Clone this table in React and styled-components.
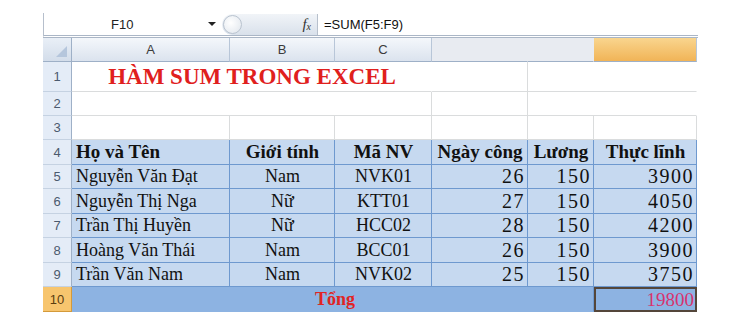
import React from 'react';
import styled, { createGlobalStyle } from 'styled-components';

const GlobalStyle = createGlobalStyle`
    body {
        margin: 0;
        background: #ffffff;
        font-family: "Liberation Sans", Arial, sans-serif;
    }
`;

const columns = [
    { key: 'A', width: 158 },
    { key: 'B', width: 105 },
    { key: 'C', width: 97 },
    { key: 'D', width: 96, blank: true },
    { key: 'E', width: 66, blank: true },
    { key: 'F', width: 103, selected: true },
];

const rowHeights = [30, 24, 24, 25, 24, 25, 24, 25, 24, 25];

const people = [
    ['Nguyễn Văn Đạt', 'Nam', 'NVK01', 26, 150, 3900],
    ['Nguyễn Thị Nga', 'Nữ', 'KTT01', 27, 150, 4050],
    ['Trần Thị Huyền', 'Nữ', 'HCC02', 28, 150, 4200],
    ['Hoàng Văn Thái', 'Nam', 'BCC01', 26, 150, 3900],
    ['Trần Văn Nam', 'Nam', 'NVK02', 25, 150, 3750],
];

const headings = ['Họ và Tên', 'Giới tính', 'Mã NV', 'Ngày công', 'Lương', 'Thực lĩnh'];

function App() {
    return (
        <Page>
            <GlobalStyle />
            <FormulaBar>
                <NameBox>
                    <span>F10</span>
                    <DropArrow />
                </NameBox>
                <FxPill>
                    <PillKnob />
                    <Fx>f<sub>x</sub></Fx>
                </FxPill>
                <Formula>=SUM(F5:F9)</Formula>
            </FormulaBar>
            <Grid>
                <Corner><CornerMark /></Corner>
                {columns.map(c => (
                    <ColHead key={c.key} $blank={c.blank} $selected={c.selected}>
                        {c.blank || c.selected ? '' : c.key}
                    </ColHead>
                ))}

                <RowHead $row={1}>1</RowHead>
                <Cell $span={3} $align="center" $noRight>
                    <Title>HÀM SUM TRONG EXCEL</Title>
                </Cell>
                <Cell />
                <Cell $span={2} $noRight />

                <RowHead $row={2}>2</RowHead>
                <Cell $span={3} />
                <Cell />
                <Cell $span={2} $noRight />

                <RowHead $row={3}>3</RowHead>
                {columns.map(c => <Cell key={c.key} />)}

                <RowHead $row={4}>4</RowHead>
                {headings.map((h, i) => (
                    <Cell key={h} $tone="data" $bold $align={i === 0 ? 'left' : 'center'}>{h}</Cell>
                ))}

                {people.map((p, r) => (
                    <React.Fragment key={p[0]}>
                        <RowHead $row={r + 5}>{r + 5}</RowHead>
                        <Cell $tone="data">{p[0]}</Cell>
                        <Cell $tone="data" $align="center">{p[1]}</Cell>
                        <Cell $tone="data" $align="center">{p[2]}</Cell>
                        <Cell $tone="data" $align="right"><Num>{p[3]}</Num></Cell>
                        <Cell $tone="data" $align="right"><Num>{p[4]}</Num></Cell>
                        <Cell $tone="data" $align="right"><Num>{p[5]}</Num></Cell>
                    </React.Fragment>
                ))}

                <RowHead $row={10} $active>10</RowHead>
                <Cell $tone="total" $span={5} $align="center" $noBottom>
                    <TotalLabel>Tổng</TotalLabel>
                </Cell>
                <ActiveCell>19800</ActiveCell>
            </Grid>
        </Page>
    );
}

export default App

const Page = styled.div`
    width: 750px;
    height: 333px;
    padding: 13px 0 0 43px;
    box-sizing: border-box;
    overflow: hidden;
`;

const FormulaBar = styled.div`
    width: 654px;
    height: 22px;
    display: flex;
    align-items: center;
    border-left: 1px solid #b6bfcc;
    border-bottom: 3px double #aab6c6;
    background: #ffffff;
`;

const NameBox = styled.div`
    width: 176px;
    display: flex;
    align-items: center;
    justify-content: space-between;
    padding-left: 67px;
    padding-right: 4px;
    box-sizing: border-box;
    font-size: 13px;
    color: #222;
`;

const DropArrow = styled.span`
    width: 0;
    height: 0;
    border-left: 4px solid transparent;
    border-right: 4px solid transparent;
    border-top: 4px solid #222;
`;

const FxPill = styled.div`
    position: relative;
    width: 96px;
    height: 21px;
    margin-left: 2px;
    border-radius: 11px 0 0 11px;
    background: linear-gradient(#f1f4f8, #d9e1eb);
    border-right: 1px solid #b7c0cc;
    display: flex;
    align-items: center;
    justify-content: flex-end;
    padding-right: 6px;
    box-sizing: border-box;
`;

const PillKnob = styled.span`
    position: absolute;
    left: 1px;
    top: 1px;
    width: 19px;
    height: 19px;
    border-radius: 50%;
    border: 1px solid #b9c3cf;
    background: radial-gradient(circle at 40% 40%, #ffffff, #dfe5ec);
    box-sizing: border-box;
`;

const Fx = styled.span`
    font-family: "Liberation Serif", serif;
    font-style: italic;
    font-size: 15px;
    color: #333;
    sub {
        font-size: 10px;
        vertical-align: -1px;
    }
`;

const Formula = styled.span`
    margin-left: 6px;
    font-size: 13px;
    color: #111;
`;

const Grid = styled.div`
    display: grid;
    grid-template-columns: 29px ${columns.map(c => `${c.width}px`).join(' ')};
    grid-template-rows: 24px ${rowHeights.map(h => `${h}px`).join(' ')};
    width: 654px;
    font-family: "Liberation Serif", "Times New Roman", serif;
`;

const Corner = styled.div`
    position: relative;
    background: linear-gradient(#e9eff7, #d3ddea);
    border-right: 1px solid #9eb0c7;
    border-bottom: 1px solid #9eb0c7;
`;

const CornerMark = styled.span`
    position: absolute;
    right: 4px;
    bottom: 4px;
    width: 0;
    height: 0;
    border-left: 11px solid transparent;
    border-bottom: 11px solid #b5c6dc;
`;

const ColHead = styled.div`
    display: flex;
    align-items: center;
    justify-content: center;
    font-family: "Liberation Sans", Arial, sans-serif;
    font-size: 13px;
    color: #3b3b3b;
    background: ${p => p.$selected
        ? 'linear-gradient(#f9d58e, #f1b457)'
        : p.$blank ? '#e8ebf1' : 'linear-gradient(#f4f7fb, #dbe3ee)'};
    border-right: 1px solid ${p => p.$blank ? '#e8ebf1' : '#b8c6d8'};
    border-bottom: 1px solid #9eb0c7;
`;

const RowHead = styled.div`
    display: flex;
    align-items: center;
    justify-content: center;
    font-family: "Liberation Sans", Arial, sans-serif;
    font-size: 13px;
    color: ${p => p.$active ? '#5a3d10' : '#4b5a6e'};
    background: ${p => p.$active ? '#f7c56e' : '#e4ecf7'};
    border-right: 1px solid ${p => p.$active ? '#d49a3a' : '#9eb0c7'};
    border-bottom: 1px solid ${p => p.$active ? '#d49a3a' : '#c5d2e2'};
`;

const Cell = styled.div`
    grid-column: span ${p => p.$span || 1};
    display: flex;
    align-items: center;
    justify-content: ${p => p.$align === 'center' ? 'center' : p.$align === 'right' ? 'flex-end' : 'flex-start'};
    padding: 0 3px 0 4px;
    overflow: hidden;
    white-space: nowrap;
    font-size: ${p => p.$bold ? '19px' : '18px'};
    font-weight: ${p => p.$bold ? 700 : 400};
    color: #111;
    background: ${p => p.$tone === 'data' ? '#c6d9f0' : p.$tone === 'total' ? '#8db3e2' : '#ffffff'};
    border-right: 1px solid ${p => p.$noRight ? 'transparent' : p.$tone ? '#6e99cf' : '#dadcdd'};
    border-bottom: 1px solid ${p => p.$noBottom ? '#8db3e2' : p.$tone ? '#6e99cf' : '#dadcdd'};
`;

const Num = styled.span`
    font-size: 20px;
    letter-spacing: 1.5px;
    margin-right: -1px;
`;

const Title = styled.span`
    font-size: 23px;
    font-weight: 700;
    color: #e0201d;
`;

const TotalLabel = styled.span`
    font-weight: 700;
    color: #e02424;
    margin-left: 4px;
`;

const ActiveCell = styled.div`
    display: flex;
    align-items: center;
    justify-content: flex-end;
    padding-right: 1px;
    font-family: "Liberation Serif", "Times New Roman", serif;
    font-size: 19px;
    color: #d8336e;
    background: #8db3e2;
    border: 2px solid #54463a;
    box-sizing: border-box;
`;
